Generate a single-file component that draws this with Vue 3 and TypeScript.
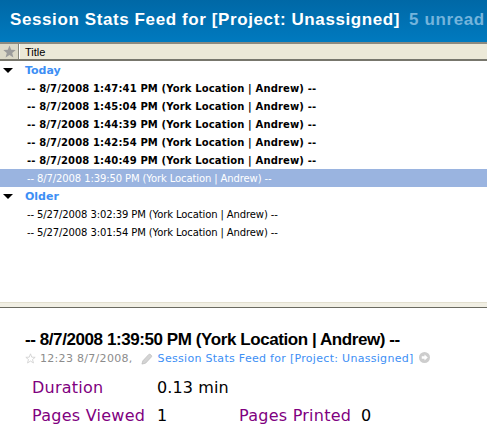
<script setup lang="ts">
interface Row { text: string; bold?: boolean; selected?: boolean }
interface Group { name: string; rows: Row[] }
const groups: Group[] = [
  { name: 'Today', rows: [
    { text: '-- 8/7/2008 1:47:41 PM (York Location | Andrew) --', bold: true },
    { text: '-- 8/7/2008 1:45:04 PM (York Location | Andrew) --', bold: true },
    { text: '-- 8/7/2008 1:44:39 PM (York Location | Andrew) --', bold: true },
    { text: '-- 8/7/2008 1:42:54 PM (York Location | Andrew) --', bold: true },
    { text: '-- 8/7/2008 1:40:49 PM (York Location | Andrew) --', bold: true },
    { text: '-- 8/7/2008 1:39:50 PM (York Location | Andrew) --', selected: true },
  ] },
  { name: 'Older', rows: [
    { text: '-- 5/27/2008 3:02:39 PM (York Location | Andrew) --' },
    { text: '-- 5/27/2008 3:01:54 PM (York Location | Andrew) --' },
  ] },
]
</script>

<template>
  <div class="app">
    <header class="banner">
      <span class="feed">Session Stats Feed for [Project: Unassigned]</span>
      <span class="unread">5 unread</span>
    </header>
    <div class="columns">
      <div class="col star-col">
        <svg width="13" height="13" viewBox="0 0 13 13"><path d="M6.5 .5 8.2 4.7 12.7 5 9.2 7.9 10.4 12.4 6.5 10 2.6 12.4 3.8 7.9 .3 5 4.8 4.7Z" fill="#9b9b9b"/></svg>
      </div>
      <div class="col title-col">Title</div>
    </div>
    <div class="list">
      <template v-for="g in groups" :key="g.name">
        <div class="group"><i class="arrow"></i><span>{{ g.name }}</span></div>
        <div v-for="r in g.rows" :key="r.text" class="row" :class="{ bold: r.bold, selected: r.selected }">{{ r.text }}</div>
      </template>
    </div>
    <div class="splitter"></div>
    <article class="detail">
      <h1>-- 8/7/2008 1:39:50 PM (York Location | Andrew) --</h1>
      <div class="meta">
        <svg class="ic-star" width="11" height="11" viewBox="0 0 13 13"><path d="M6.5 1 8 4.9 12 5.1 8.9 7.7 10 11.8 6.5 9.5 3 11.8 4.1 7.7 1 5.1 5 4.9Z" fill="#fff" stroke="#cfcfcf"/></svg>
        <span class="when">12:23 8/7/2008,</span>
        <svg class="ic-pen" width="12" height="12" viewBox="0 0 13 13"><path d="M1 12 2 8.5 8.5 1.5C9.5 .7 12 2.5 11.5 4L5 11Z" fill="#d4d4d4" stroke="#bcbcbc" stroke-width=".8"/></svg>
        <a class="source">Session Stats Feed for [Project: Unassigned]</a>
        <svg class="ic-go" width="11" height="11" viewBox="0 0 12 12"><circle cx="6" cy="6" r="6" fill="#cdcdcd"/><path d="M3 4.7H6V2.6L9.6 6 6 9.4V7.3H3Z" fill="#fff"/></svg>
      </div>
      <div class="stats">
        <span class="label">Duration</span><span class="value">0.13 min</span><span></span><span></span>
        <span class="label">Pages Viewed</span><span class="value">1</span>
        <span class="label">Pages Printed</span><span class="value">0</span>
      </div>
    </article>
  </div>
</template>

<style scoped>
.app { width: 487px; height: 428px; overflow: hidden; background: #fff; display: flex; flex-direction: column; font-family: "DejaVu Sans", sans-serif; }
.banner { height: 42px; box-sizing: border-box; flex: none; background: linear-gradient(#0068a6, #007abf); padding: 10px 0 0 10px; display: flex; gap: 9px; white-space: nowrap; font: bold 17px/20px "Liberation Sans", sans-serif; letter-spacing: .6px; }
.feed { color: #fff; }
.unread { color: #74b4dc; }
.columns { height: 19px; flex: none; display: flex; box-sizing: border-box; background: #ece9d8; border-top: 2px solid #8b8a80; border-bottom: 2px solid #77766c; }
.col { height: 15px; }
.star-col { width: 18px; display: flex; align-items: center; justify-content: center; background: #dcd9c8; border-right: 1px solid #88877c; }
.title-col { padding: 2px 0 0 5px; height: 13px; border-left: 1px solid #fff; font: 11px/13px "Liberation Sans", sans-serif; color: #000; }
.list { height: 241px; flex: none; font-size: 10px; }
.group { height: 18px; display: flex; align-items: center; padding-left: 25px; position: relative; color: #3d8ff5; font: bold 11px/20px "DejaVu Sans", sans-serif; }
.group span { position: relative; top: 1px; }
.arrow { position: absolute; left: 3px; top: 7px; width: 0; height: 0; border: 5px solid transparent; border-top: 5px solid #000; border-bottom: 0; }
.row { height: 18px; line-height: 20px; padding-left: 27px; color: #000; white-space: nowrap; letter-spacing: -.11px; }
.row.bold { font-weight: bold; letter-spacing: .14px; }
.row.selected { background: #9ab4e0; color: #fff; }
.splitter { flex: none; background: #f1efe4; border-bottom: 1px solid #6a6a60; border-top: 1px solid #e2dfcf; height: 4px; }
.detail { flex: 1; padding: 22px 0 0 25px; }
h1 { margin: 0; font: bold 17px/20px "Liberation Sans", sans-serif; letter-spacing: -.42px; color: #000; white-space: nowrap; }
.meta { display: flex; align-items: center; height: 15px; margin-top: 1px; font-size: 11px; white-space: nowrap; letter-spacing: .3px; }
.when { color: #8c8c8c; margin-left: 4px; }
.ic-pen { margin-left: 8px; }
.source { color: #3d8ff5; margin-left: 5px; }
.ic-go { margin-left: 5px; margin-top: -3px; }
.stats { display: grid; grid-template-columns: 125px 82px 122px auto; margin: 8px 0 0 7px; font-size: 16px; line-height: 28px; white-space: nowrap; letter-spacing: .25px; }
.label { color: #800080; }
.value { color: #000; letter-spacing: .1px; }
</style>
